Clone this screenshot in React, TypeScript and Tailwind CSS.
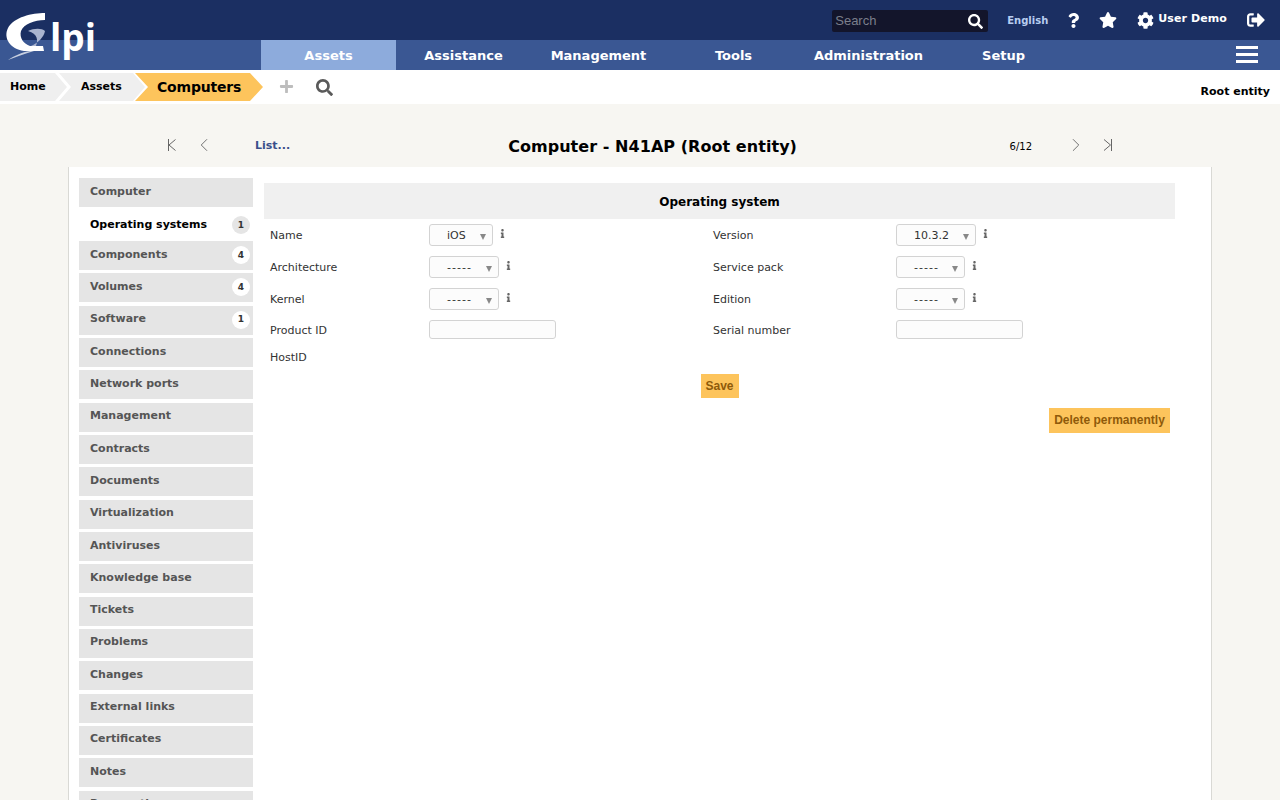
import { ChevronLeft, ChevronRight } from "lucide-react";
import { FaCog, FaPlus, FaQuestion, FaSearch, FaSignOutAlt, FaStar, FaInfo } from "react-icons/fa";

const SANS = "font-['DejaVu_Sans',Verdana,sans-serif]";

const NAV = [
  { label: "Assets", active: true },
  { label: "Assistance" },
  { label: "Management" },
  { label: "Tools" },
  { label: "Administration" },
  { label: "Setup" },
];

const TABS: { label: string; count?: number }[] = [
  { label: "Components", count: 4 },
  { label: "Volumes", count: 4 },
  { label: "Software", count: 1 },
  { label: "Connections" },
  { label: "Network ports" },
  { label: "Management" },
  { label: "Contracts" },
  { label: "Documents" },
  { label: "Virtualization" },
  { label: "Antiviruses" },
  { label: "Knowledge base" },
  { label: "Tickets" },
  { label: "Problems" },
  { label: "Changes" },
  { label: "External links" },
  { label: "Certificates" },
  { label: "Notes" },
  { label: "Reservations" },
];

function Logo() {
  return (
    <div className="absolute left-0 top-0 h-[62px] w-[100px]">
      <svg width="50" height="62" viewBox="0 0 50 62" className="absolute left-0 top-0">
        <path
          d="M45 13 C32 13 14 17 8 28 C3 38 10 49 24 51 L44 51 L43 46 L30 46 C24 44 19 38 21 31 C24 24 34 20 45 20 Z"
          fill="#ffffff"
        />
        <path d="M28 31 C34 28 42 28 45 31 C44 37 38 43 31 46 L36 46 C38 40 38 34 28 31 Z" fill="#aab4cf" />
        <path d="M8 60 C14 56 22 52 30 51 L34 51 C24 54 16 57 8 60 Z" fill="#c7cfe0" />
      </svg>
      <span className="absolute left-[50px] top-[15px] font-['Open_Sans',sans-serif] text-[37px] font-bold leading-[44px] text-white">
        lpi
      </span>
    </div>
  );
}

function TopBar() {
  return (
    <div className="flex h-[40px] items-center justify-end bg-[#1b2f62]">
      <div className="mr-[19px] mt-[2px] flex h-[22px] w-[156px] items-center justify-between rounded-[2px] bg-[#13152b] pl-[3px] pr-[5px]">
        <span className="font-['Liberation_Sans',Arial,sans-serif] text-[13px] text-[#7b7f8c]">Search</span>
        <FaSearch className="h-[15px] w-[15px] text-white" />
      </div>
      <span className="mr-[18px] text-[10px] font-bold text-[#b7cdf0]">English</span>
      <FaQuestion className="mr-[18px] h-[15px] w-[15px] text-white" />
      <FaStar className="mr-[20px] h-[18px] w-[18px] text-white" />
      <FaCog className="mr-[4px] h-[17px] w-[17px] text-white" />
      <span className="mr-[20px] mb-[1px] text-[11px] font-bold tracking-[0.1px] text-white">User Demo</span>
      <FaSignOutAlt className="mr-[15px] h-[18px] w-[18px] text-white" />
    </div>
  );
}

function NavBar() {
  return (
    <div className="flex h-[30px] items-stretch bg-[#3a5793] pl-[261px]">
      {NAV.map((item) => (
        <div
          key={item.label}
          className={`flex w-[135px] items-center justify-center pt-[2px] text-[13px] font-bold text-white ${item.active ? "bg-[#8dabdc]" : ""}`}
        >
          {item.label}
        </div>
      ))}
      <div className="ml-auto mr-[22px] flex w-[22px] flex-col justify-center gap-[4px] pb-[1px]">
        <span className="h-[3px] bg-white" />
        <span className="h-[3px] bg-white" />
        <span className="h-[3px] bg-white" />
      </div>
    </div>
  );
}

function Breadcrumbs() {
  return (
    <div className="flex h-[34px] items-start bg-white">
      <div className="mt-[3px] flex h-[28px] items-stretch">
        <div className="flex w-[67px] items-center bg-[#efefef] pl-[10px] pt-[1px] text-[11px] font-bold text-black [clip-path:polygon(0_0,calc(100%-12px)_0,100%_50%,calc(100%-12px)_100%,0_100%)]">
          Home
        </div>
        <div className="-ml-[8px] flex w-[86px] items-center bg-[#efefef] pl-[22px] pt-[1px] text-[11px] font-bold text-black [clip-path:polygon(0_0,calc(100%-12px)_0,100%_50%,calc(100%-12px)_100%,0_100%,12px_50%)]">
          Assets
        </div>
        <div className="-ml-[10px] flex w-[128px] items-center bg-[#fdc45c] pl-[22px] text-[14px] font-bold tracking-[-0.2px] text-black [clip-path:polygon(0_0,calc(100%-13px)_0,100%_50%,calc(100%-13px)_100%,0_100%,13px_50%)]">
          Computers
        </div>
      </div>
      <FaPlus className="ml-[16px] mt-[9px] h-[15px] w-[15px] text-[#bdbdbd]" />
      <FaSearch className="ml-[22px] mt-[9px] h-[17px] w-[17px] text-[#5a5a5a]" />
      <span className="ml-auto mr-[10px] mt-[14px] text-[11px] font-bold text-black">Root entity</span>
    </div>
  );
}

function PagerEnd({ last }: { last?: boolean }) {
  return (
    <svg width="22" height="22" viewBox="0 0 22 22" fill="none" stroke="#666" strokeWidth="1">
      {last ? <path d="M7 5.5 L13.5 11 L7 16.5 M14.5 5 V17" /> : <path d="M14.5 5.5 L8 11 L14.5 16.5 M7.5 5 V17" />}
    </svg>
  );
}

function Pager() {
  return (
    <div className="flex h-[63px] items-center pb-[2px] pl-[161px] pr-[161px] pt-[20px]">
      <PagerEnd />
      <ChevronLeft strokeWidth={1} className="ml-[10px] h-[22px] w-[22px] text-[#666]" />
      <span className="ml-[40px] pt-[4px] text-[11px] font-bold text-[#3a4f8b]">List...</span>
      <span className="ml-[218px] pt-[4px] text-[16px] font-bold tracking-[0.05px] text-black">
        Computer - N41AP (Root entity)
      </span>
      <span className="ml-auto pt-[4px] text-[10px] text-black">6/12</span>
      <ChevronRight strokeWidth={1} className="ml-[33px] h-[22px] w-[22px] text-[#666]" />
      <div className="ml-[10px]">
        <PagerEnd last />
      </div>
    </div>
  );
}

function Badge({ count, active }: { count: number; active?: boolean }) {
  return (
    <span
      className={`flex h-[18px] w-[18px] items-center justify-center rounded-full text-[9px] font-bold text-[#333] ${active ? "bg-[#e5e5e5]" : "bg-white"}`}
    >
      {count}
    </span>
  );
}

function Sidebar() {
  return (
    <div className="w-[174px] shrink-0 pt-[11px]">
      <div className="mb-[4px] h-[29px] bg-[#e5e5e5] pl-[11px] pt-[6px] text-[11px] font-bold leading-[15px] text-[#555]">
        Computer
      </div>
      <div className="flex h-[30px] items-start justify-between pl-[11px] pr-[3px] text-[11px] font-bold leading-[15px] text-black">
        <span className="pt-[6px]">Operating systems</span>
        <span className="pt-[5px]">
          <Badge count={1} active />
        </span>
      </div>
      {TABS.map((tab) => (
        <div
          key={tab.label}
          className="mb-[3.33px] flex h-[29px] items-start justify-between bg-[#e5e5e5] pl-[11px] pr-[3px] text-[11px] font-bold leading-[15px] text-[#555]"
        >
          <span className="pt-[5.55px]">{tab.label}</span>
          {tab.count ? (
            <span className="pt-[5px]">
              <Badge count={tab.count} />
            </span>
          ) : null}
        </div>
      ))}
    </div>
  );
}

function SelectBox({ value, width }: { value: string; width: string }) {
  return (
    <div className="mb-[2px] flex items-center">
      <div
        className={`${width} relative flex h-[22px] items-center rounded-[3px] border border-[#d3d3d3] bg-[#fcfcfc] pl-[17px] pt-[2px] text-[11px] text-[#333] ${value === "-----" ? "tracking-[1px]" : ""}`}
      >
        {value}
        <span className="absolute right-[6px] top-[9px] h-0 w-0 border-x-[3px] border-t-[6px] border-x-transparent border-t-[#888]" />
      </div>
      <FaInfo className="mb-[3px] ml-[5px] h-[9px] w-[9px] text-[#666]" />
    </div>
  );
}

function TextBox() {
  return <div className="mb-[4px] h-[19px] w-[127px] rounded-[3px] border border-[#d3d3d3] bg-[#fcfcfc]" />;
}

function FormRow({ label, field, height, labelWidth }: { label: string; field?: React.ReactNode; height: string; labelWidth: string }) {
  return (
    <div className={`${height} flex items-center`}>
      <span className={`${labelWidth} pl-[6px] text-[11px] text-[#333]`}>{label}</span>
      {field}
    </div>
  );
}

function OperatingSystemForm() {
  return (
    <div className="w-[911px] pt-[16px]">
      <div className="flex h-[36px] items-center justify-center bg-[#f0f0f0] pt-[1px] text-[12px] font-bold text-black">
        Operating system
      </div>
      <div className="grid grid-cols-[443px_1fr] pt-[1px]">
        <div>
          <FormRow height="h-[32px]" labelWidth="w-[165px]" label="Name" field={<SelectBox value="iOS" width="w-[64px]" />} />
          <FormRow height="h-[32px]" labelWidth="w-[165px]" label="Architecture" field={<SelectBox value="-----" width="w-[70px]" />} />
          <FormRow height="h-[32px]" labelWidth="w-[165px]" label="Kernel" field={<SelectBox value="-----" width="w-[70px]" />} />
          <FormRow height="h-[30px]" labelWidth="w-[165px]" label="Product ID" field={<TextBox />} />
          <FormRow height="h-[24px]" labelWidth="w-[165px]" label="HostID" />
        </div>
        <div>
          <FormRow height="h-[32px]" labelWidth="w-[189px]" label="Version" field={<SelectBox value="10.3.2" width="w-[80px]" />} />
          <FormRow height="h-[32px]" labelWidth="w-[189px]" label="Service pack" field={<SelectBox value="-----" width="w-[69px]" />} />
          <FormRow height="h-[32px]" labelWidth="w-[189px]" label="Edition" field={<SelectBox value="-----" width="w-[69px]" />} />
          <FormRow height="h-[30px]" labelWidth="w-[189px]" label="Serial number" field={<TextBox />} />
        </div>
      </div>
      <div className="flex justify-center pt-[4px]">
        <div className="flex h-[24px] w-[38px] items-center justify-center bg-[#fdc45c] font-['Liberation_Sans',Arial,sans-serif] text-[12px] font-bold text-[#8f5a0a]">
          Save
        </div>
      </div>
      <div className="flex justify-end pr-[5px] pt-[10px]">
        <div className="flex h-[25px] w-[121px] items-center justify-center bg-[#fdc45c] pb-[1px] font-['Liberation_Sans',Arial,sans-serif] text-[12px] font-bold text-[#8f5a0a]">
          Delete permanently
        </div>
      </div>
    </div>
  );
}

export default function App() {
  return (
    <div className={`${SANS} relative h-[800px] overflow-hidden bg-[#f7f6f2]`}>
      <TopBar />
      <NavBar />
      <Logo />
      <Breadcrumbs />
      <Pager />
      <div className="mx-[68px] flex h-[633px] border-x border-[#d9d9d5] bg-white pl-[10px]">
        <Sidebar />
        <div className="w-[11px] shrink-0" />
        <OperatingSystemForm />
      </div>
    </div>
  );
}
